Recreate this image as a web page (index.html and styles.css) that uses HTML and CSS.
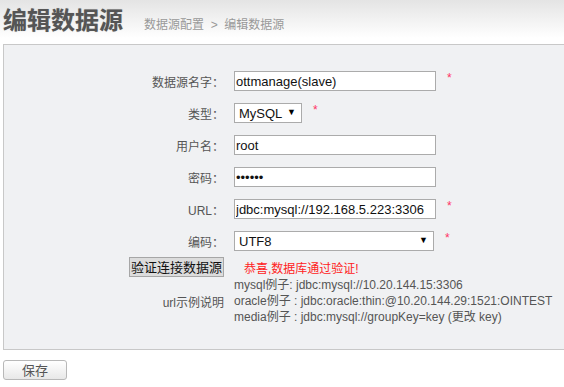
FILE: index.html
```html
<!DOCTYPE html>
<html lang="zh-CN">
<head>
    <meta charset="UTF-8" />
    <title>编辑数据源</title>
    <link rel="stylesheet" href="styles.css">
</head>
<body>

    <div class="header">
        <h1>编辑数据源</h1>
        <span class="crumb">数据源配置&nbsp; &gt; &nbsp;编辑数据源</span>
    </div>

    <form class="panel" id="sourceForm">
        <div class="row">
            <label class="label" for="name">数据源名字：</label>
            <input class="field" type="text" id="name" value="ottmanage(slave)">
            <span class="star">*</span>
        </div>
        <div class="row">
            <label class="label" for="type">类型：</label>
            <span class="select short">
                <select id="type">
                    <option>MySQL</option>
                    <option>Oracle</option>
                </select>
            </span>
            <span class="star">*</span>
        </div>
        <div class="row">
            <label class="label" for="user">用户名：</label>
            <input class="field" type="text" id="user" value="root">
        </div>
        <div class="row">
            <label class="label" for="pass">密码：</label>
            <input class="field" type="password" id="pass" value="123456">
        </div>
        <div class="row">
            <label class="label" for="url">URL：</label>
            <input class="field" type="text" id="url" value="jdbc:mysql://192.168.5.223:3306">
            <span class="star">*</span>
        </div>
        <div class="row">
            <label class="label" for="encode">编码：</label>
            <span class="select long">
                <select id="encode">
                    <option>UTF8</option>
                    <option>GBK</option>
                </select>
            </span>
            <span class="star">*</span>
        </div>
        <div class="row check">
            <div class="label">
                <button type="button" class="check-btn">验证连接数据源</button>
            </div>
            <span class="msg">恭喜,数据库通过验证!</span>
        </div>
        <div class="row examples">
            <div class="label">url示例说明</div>
            <div class="lines">
                <div>mysql例子: jdbc:mysql://10.20.144.15:3306</div>
                <div>oracle例子 : jdbc:oracle:thin:@10.20.144.29:1521:OINTEST</div>
                <div>media例子 : jdbc:mysql://groupKey=key (更改 key)</div>
            </div>
        </div>
    </form>

    <button type="button" class="save">保存</button>

</body>
</html>
```

FILE: styles.css
```css
html, body {
    overflow: hidden;
}
body {
    margin: 0;
    font-family: 'Liberation Sans', 'Noto Sans CJK SC', sans-serif;
    color: #555;
    background: #fff;
}
.header {
    height: 44px;
    display: flex;
    align-items: baseline;
    padding: 0 3px;
    background: linear-gradient(to bottom, #e4e4e4, #fff 38px);
}
.header h1 {
    margin: 0;
    font-size: 24px;
    line-height: 42px;
    font-weight: bold;
    color: #555;
    text-shadow: 0 0 1px #aaa;
}
.crumb {
    margin-left: 21px;
    font-size: 12px;
    color: #999;
}
.panel {
    margin: 0 -20px 0 3px;
    padding: 20px 0 24px;
    border: 1px solid #c8c8c8;
    background: #f0f1f3;
}
.row {
    display: flex;
    align-items: center;
    height: 32px;
}
.label {
    width: 220px;
    flex: none;
    text-align: right;
    font-size: 12px;
    color: #555;
    margin-right: 10px;
}
.field {
    box-sizing: border-box;
    width: 202px;
    height: 20px;
    margin: 0;
    padding: 0 1px;
    border: 1px solid #ababab;
    background: #fff;
    font-family: 'Liberation Sans', sans-serif;
    font-size: 13px;
    color: #111;
    outline: none;
}
.select {
    position: relative;
    display: inline-block;
}
.select select {
    box-sizing: border-box;
    height: 20px;
    margin: 0;
    padding: 0 0 0 4px;
    border: 1px solid #ababab;
    border-radius: 0;
    background: #fff;
    font-family: 'Liberation Sans', sans-serif;
    font-size: 13px;
    color: #111;
    appearance: none;
    outline: none;
}
.select::after {
    content: "▼";
    position: absolute;
    right: 6px;
    top: 4px;
    font-size: 9px;
    color: #000;
    pointer-events: none;
}
.short select {
    width: 68px;
}
.long select {
    width: 200px;
}
.star {
    margin-left: 11px;
    margin-top: -6px;
    font-size: 12px;
    color: #f36;
}
.check {
    height: 20px;
}
.check-btn {
    box-sizing: border-box;
    height: 20px;
    margin: 0;
    padding: 0 1px;
    border: 1px solid #a6a6a6;
    background: #dcdcdc;
    font-family: 'Noto Sans CJK SC', sans-serif;
    font-size: 13px;
    line-height: 18px;
    color: #111;
}
.msg {
    margin-left: 10px;
    font-size: 12px;
    color: #f22;
}
.examples {
    height: auto;
}
.lines {
    font-size: 12px;
    line-height: 16px;
    color: #555;
}
.save {
    display: block;
    box-sizing: border-box;
    width: 64px;
    height: 20px;
    margin: 10px 0 0 3px;
    padding: 0;
    border: 1px solid #b8b8b8;
    border-radius: 3px;
    background: linear-gradient(to bottom, #fff, #e8e8e8);
    font-family: 'Noto Sans CJK SC', sans-serif;
    font-size: 13px;
    line-height: 18px;
    color: #555;
}
```
